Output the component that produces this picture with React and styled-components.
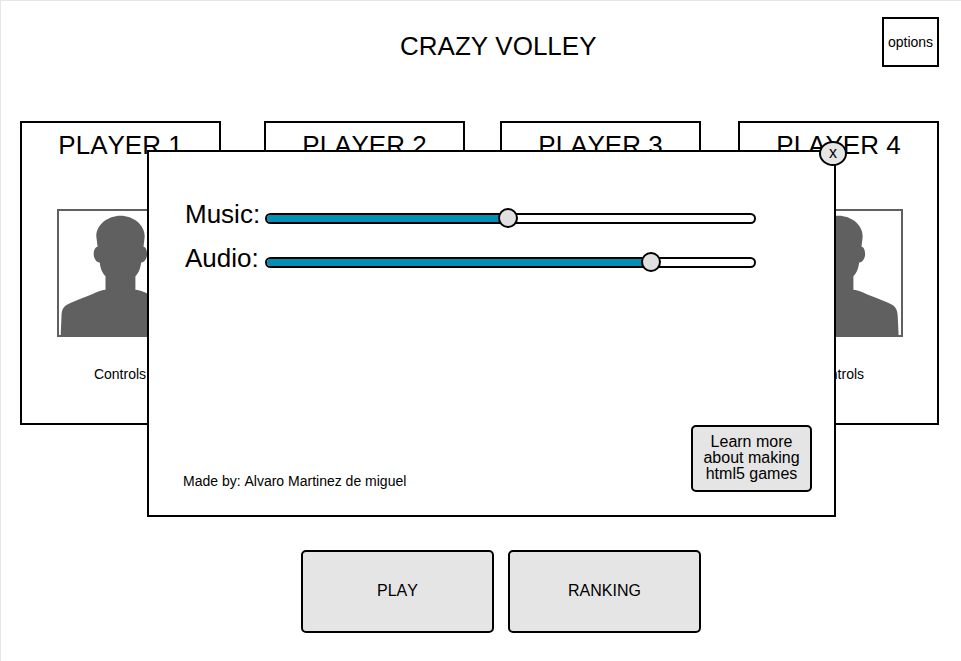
import React from "react";
import styled, { createGlobalStyle } from "styled-components";

const GlobalStyle = createGlobalStyle`
  *, *::before, *::after { box-sizing: border-box; }
  body {
    margin: 0;
    background: #fff;
    color: #000;
    font-family: "Liberation Sans", Arial, sans-serif;
    font-kerning: none;
    overflow: hidden;
  }
  button { font-family: inherit; font-kerning: inherit; color: inherit; padding: 0; }
`;

const Game = styled.main`
  position: relative;
  width: 961px;
  height: 661px;
  border: solid #e6e6e6;
  border-width: 1px 0 0 1px;
  padding: 16px 22px 0 19px;
`;

const Header = styled.header`
  display: grid;
  grid-template-columns: 1fr 57px;
  grid-template-rows: 50px;
`;

const Title = styled.h1`
  margin: 0;
  padding-left: 380px;
  font-size: 26px;
  font-weight: 400;
  line-height: 58px;
  white-space: nowrap;
`;

const OptionsButton = styled.button`
  border: 2px solid #000;
  background: #fff;
  font-size: 14px;
`;

const Players = styled.section`
  display: grid;
  grid-template-columns: 244px 236px 238px 201px;
  margin-top: 54px;
`;

const PlayerCard = styled.article`
  display: flex;
  flex-direction: column;
  align-items: center;
  width: 201px;
  height: 304px;
  padding-right: 1px;
  border: 2px solid #000;
`;

const PlayerName = styled.h2`
  margin: 7px 0 0;
  padding-left: 1px;
  font-size: 26px;
  font-weight: 400;
  line-height: 30px;
`;

const Avatar = styled.div`
  flex: none;
  align-self: flex-start;
  width: 128px;
  height: 128px;
  margin: 49px 0 0 35px;
  border: 2px solid #606060;

  svg { display: block; }
`;

const ControlsLabel = styled.p`
  margin: 29px 0 0;
  font-size: 14px;
  line-height: 16px;
`;

const Actions = styled.nav`
  display: flex;
  gap: 14px;
  margin: 125px 0 0 281px;
`;

const GreyButton = styled.button`
  flex: none;
  width: ${(p) => p.$width}px;
  height: ${(p) => p.$height}px;
  padding-bottom: 2px;
  border: 2px solid #000;
  border-radius: 5px;
  background: #e5e5e5;
  font-size: 16px;
  line-height: 16px;
`;

const Dialog = styled.section`
  position: absolute;
  left: 146px;
  top: 149px;
  width: 689px;
  height: 367px;
  padding: 44px 22px 23px 34px;
  display: flex;
  flex-direction: column;
  justify-content: space-between;
  border: 2px solid #000;
  background: #fff;
`;

const CloseButton = styled.button`
  position: absolute;
  top: -11px;
  right: -13px;
  width: 28px;
  height: 25px;
  padding-bottom: 2px;
  border: 2px solid #000;
  border-radius: 50%;
  background: #e5e5e5;
  font-size: 16px;
  line-height: 19px;
`;

const Settings = styled.div`
  display: grid;
  grid-auto-rows: 44px;
  padding-left: 2px;
`;

const Setting = styled.div`
  display: grid;
  grid-template-columns: 80px 491px;
  align-items: start;
`;

const SettingName = styled.span`
  font-size: 26px;
  line-height: 36px;
`;

const Track = styled.div`
  position: relative;
  height: 11px;
  margin-top: 17px;
  border: 2px solid #000;
  border-radius: 6px;
  background: #fff;
`;

const Fill = styled.div`
  height: 100%;
  border-radius: 3px 0 0 3px;
  background: #008fb5;
`;

const Thumb = styled.div`
  position: absolute;
  top: -7px;
  width: 20px;
  height: 20px;
  margin-left: -10px;
  border: 2px solid #000;
  border-radius: 50%;
  background: #e0e0e0;
`;

const DialogFooter = styled.footer`
  display: flex;
  justify-content: space-between;
  align-items: flex-end;
`;

const Credit = styled.p`
  margin: 0 0 3px;
  font-size: 14px;
  line-height: 16px;
`;

function Silhouette() {
  return (
    <svg width="124" height="124" viewBox="2 2 124 124" aria-hidden="true">
      <path
        fill="#606060"
        d="M63.5 6.8C76 6.8 87.7 15.5 87.7 27.5L86.5 37.8C89 38.2 90.1 41.5 90.1 45C90.1 49.5 87.5 53.5 84.2 53.4C83.3 60 81.5 64 78.4 67.2V80.8C84 81.5 88 83.5 95 86.5C104 90.3 112 92.5 118 96.2C122 99.5 122.5 103 122.7 107L123.6 126H3.7L4.5 107C4.7 103 5 99.5 9 96.3C15 92.5 23 90.3 32 86.5C39 83.5 43 81.5 48.5 80.8V67.2C45.5 64 43.5 60 42.7 53.4C39.3 53.5 36.7 49.5 36.7 45C36.7 41.5 38 38.2 40.6 37.8L39.3 27.5C39.3 15.5 51 6.8 63.5 6.8Z"
      />
    </svg>
  );
}

function VolumeSetting({ name, position }) {
  return (
    <Setting>
      <SettingName>{name}:</SettingName>
      <Track>
        <Fill style={{ width: position }} />
        <Thumb style={{ left: position }} />
      </Track>
    </Setting>
  );
}

export default function App() {
  return (
    <Game>
      <GlobalStyle />
      <Header>
        <Title>CRAZY VOLLEY</Title>
        <OptionsButton>options</OptionsButton>
      </Header>
      <Players>
        {[1, 2, 3, 4].map((n) => (
          <PlayerCard key={n}>
            <PlayerName>PLAYER {n}</PlayerName>
            <Avatar>
              <Silhouette />
            </Avatar>
            <ControlsLabel>Controls</ControlsLabel>
          </PlayerCard>
        ))}
      </Players>
      <Actions>
        <GreyButton $width={193} $height={83}>PLAY</GreyButton>
        <GreyButton $width={193} $height={83}>RANKING</GreyButton>
      </Actions>
      <Dialog>
        <CloseButton>x</CloseButton>
        <Settings>
          <VolumeSetting name="Music" position={241} />
          <VolumeSetting name="Audio" position={384} />
        </Settings>
        <DialogFooter>
          <Credit>Made by: Alvaro Martinez de miguel</Credit>
          <GreyButton $width={121} $height={67}>
            Learn more
            <br />
            about making
            <br />
            html5 games
          </GreyButton>
        </DialogFooter>
      </Dialog>
    </Game>
  );
}
